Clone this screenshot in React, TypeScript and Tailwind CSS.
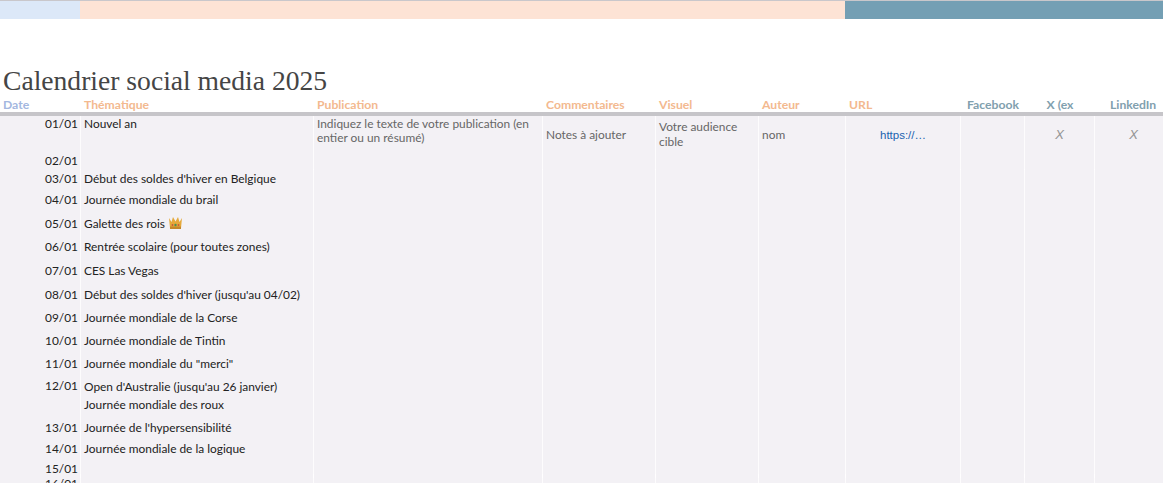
import React from 'react';

const gridCols = 'grid grid-cols-[81px_233px_229px_113px_103px_87px_115px_64px_70px_68px]';
const cell = 'border-r border-white/80';

const rows: { date: string; height: string; theme?: React.ReactNode; top?: boolean }[] = [
  { date: '02/01', height: 'h-[18px]' },
  { date: '03/01', height: 'h-[19px]', theme: "Début des soldes d'hiver en Belgique" },
  { date: '04/01', height: 'h-[22px]', theme: 'Journée mondiale du brail' },
  { date: '05/01', height: 'h-[26px]', theme: <span className="flex items-center gap-[3px]">Galette des rois <Crown /></span> },
  { date: '06/01', height: 'h-[21px]', theme: 'Rentrée scolaire (pour toutes zones)' },
  { date: '07/01', height: 'h-[26px]', theme: 'CES Las Vegas' },
  { date: '08/01', height: 'h-[22px]', theme: "Début des soldes d'hiver (jusqu'au 04/02)" },
  { date: '09/01', height: 'h-[24px]', theme: 'Journée mondiale de la Corse' },
  { date: '10/01', height: 'h-[23px]', theme: 'Journée mondiale de Tintin' },
  { date: '11/01', height: 'h-[23px]', theme: 'Journée mondiale du "merci"' },
  { date: '12/01', height: 'h-[41px]', top: true, theme: <>Open d'Australie (jusqu'au 26 janvier)<br />Journée mondiale des roux</> },
  { date: '13/01', height: 'h-[22px]', theme: "Journée de l'hypersensibilité" },
  { date: '14/01', height: 'h-[21px]', theme: 'Journée mondiale de la logique' },
  { date: '15/01', height: 'h-[15px]' },
  { date: '16/01', height: 'h-[18px]' },
];

function Crown() {
  return (
    <svg width="15" height="14" viewBox="0 0 15 14">
      <path d="M1 2l2.5 4L5 1l2.5 4.5L10 1l1.5 5L14 2l-1 10H2z" fill="#e5a93a" />
      <path d="M2 10.5h11V13H2z" fill="#c4872a" />
      <circle cx="7.5" cy="9" r="1.2" fill="#4a8f55" />
      <circle cx="4.5" cy="9" r="0.9" fill="#c9573a" />
      <circle cx="10.5" cy="9" r="0.9" fill="#c9573a" />
    </svg>
  );
}

function EmptyCells() {
  return (
    <>
      <div className={cell} />
      <div className={cell} />
      <div className={cell} />
      <div className={cell} />
      <div className={cell} />
      <div className={cell} />
      <div className={cell} />
      <div />
    </>
  );
}

export default function App() {
  return (
    <div className="h-[483px] w-[1163px] overflow-hidden bg-white font-['Lato',sans-serif] text-[11.9px]">
      <div className="flex h-[19px] border-t border-[#c9c7cb]">
        <div className="w-[80px] bg-[#dce8f8]" />
        <div className="w-[765px] bg-[#fde3d5]" />
        <div className="flex-1 bg-[#749fb4]" />
      </div>

      <h1 className="mt-[46px] h-[32px] pl-[3px] font-['Liberation_Serif',serif] text-[27.6px] leading-[32px] text-[#454545]">
        Calendrier social media 2025
      </h1>

      <div className={`${gridCols} h-[15px] text-[12.2px] font-bold leading-[15px] text-[#f3b98f]`}>
        <div className="pl-[3px] text-[#a3b7e0]">Date</div>
        <div className="pl-[3px]">Thématique</div>
        <div className="pl-[3px]">Publication</div>
        <div className="pl-[3px]">Commentaires</div>
        <div className="pl-[3px]">Visuel</div>
        <div className="pl-[3px]">Auteur</div>
        <div className="pl-[3px]">URL</div>
        <div className="text-center text-[#81a0ae]">Facebook</div>
        <div className="text-center text-[#81a0ae]">X (ex</div>
        <div className="pl-[15px] text-[#81a0ae]">LinkedIn</div>
      </div>

      <div className="h-[4px] bg-[#c6c5c9]" />

      <div className="bg-[#f3f1f5] text-[#222222]">
        <div className={`${gridCols} h-[35px] leading-[14px] text-[#666666]`}>
          <div className={`${cell} pr-[2px] pt-[1px] text-right text-[#222222]`}>01/01</div>
          <div className={`${cell} pl-[3px] pt-[1px] text-[#222222]`}>Nouvel an</div>
          <div className={`${cell} pl-[3px] pt-[1px]`}>Indiquez le texte de votre publication (en entier ou un résumé)</div>
          <div className={`${cell} flex items-center pl-[3px] pt-[2px]`}>Notes à ajouter</div>
          <div className={`${cell} flex items-center pl-[3px] leading-[15px]`}>Votre audience cible</div>
          <div className={`${cell} flex items-center pl-[3px] pt-[2px]`}>nom</div>
          <div className={`${cell} flex items-center justify-center pt-[2px] font-['Liberation_Sans',sans-serif] text-[11.5px] text-[#1a62b0]`}>https://…</div>
          <div className={cell} />
          <div className={`${cell} flex items-center justify-center pt-[2px] font-['Liberation_Sans',sans-serif] text-[13px] italic text-[#949494]`}>X</div>
          <div className="flex items-center justify-end pr-[25px] pt-[2px] font-['Liberation_Sans',sans-serif] text-[13px] italic text-[#949494]">X</div>
        </div>

        {rows.map((row) => (
          <div key={row.date} className={`${gridCols} ${row.height} ${row.top ? 'leading-[18px]' : 'leading-[19px]'}`}>
            <div className={`${cell} flex justify-end pr-[2px] ${row.top ? 'items-start pt-[2px]' : 'items-center'}`}>{row.date}</div>
            <div className={`${cell} flex items-center whitespace-nowrap pl-[3px]`}>
              <div>{row.theme}</div>
            </div>
            <EmptyCells />
          </div>
        ))}
      </div>
    </div>
  );
}
